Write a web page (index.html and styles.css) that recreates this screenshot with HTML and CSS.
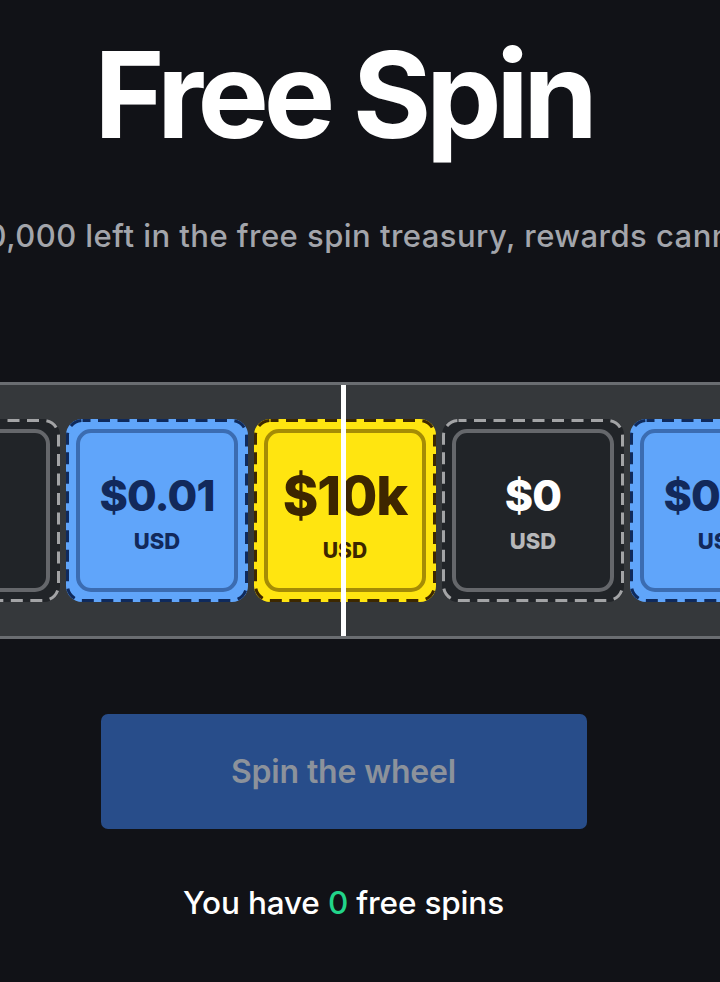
FILE: index.html
```html
<!DOCTYPE html>
<html lang="en">
<head>
<meta charset="utf-8">
<title>Free Spin</title>
<link rel="stylesheet" href="styles.css">
</head>
<body>
<main class="page">
  <header class="hero">
    <h1 class="title">Free Spin</h1>
    <div class="subtitle"><span>There is $10,000 left in the free spin treasury, rewards cannot exceed</span></div>
  </header>

  <section class="strip">
    <div class="reel">
      <div class="tile tile-dark">
        <svg class="dash" viewBox="0 0 182 183"><rect x="1.5" y="1.5" width="179" height="180" rx="15" ry="15"/></svg>
        <div class="tile-inner"><span class="value">$0</span><span class="unit">USD</span></div>
      </div>
      <div class="tile tile-blue">
        <svg class="dash" viewBox="0 0 182 183"><rect x="1.5" y="1.5" width="179" height="180" rx="15" ry="15"/></svg>
        <div class="tile-inner"><span class="value">$0.01</span><span class="unit">USD</span></div>
      </div>
      <div class="tile tile-yellow">
        <svg class="dash" viewBox="0 0 182 183"><rect x="1.5" y="1.5" width="179" height="180" rx="15" ry="15"/></svg>
        <div class="tile-inner"><span class="value value-big">$10k</span><span class="unit unit-big">USD</span></div>
      </div>
      <div class="tile tile-dark">
        <svg class="dash" viewBox="0 0 182 183"><rect x="1.5" y="1.5" width="179" height="180" rx="15" ry="15"/></svg>
        <div class="tile-inner"><span class="value">$0</span><span class="unit">USD</span></div>
      </div>
      <div class="tile tile-blue">
        <svg class="dash" viewBox="0 0 182 183"><rect x="1.5" y="1.5" width="179" height="180" rx="15" ry="15"/></svg>
        <div class="tile-inner"><span class="value">$0.01</span><span class="unit">USD</span></div>
      </div>
    </div>
    <div class="pointer"></div>
  </section>

  <section class="actions">
    <button class="spin-btn" type="button" disabled>Spin the wheel</button>
    <p class="count">You have <span class="count-num">0</span> free spins</p>
  </section>
</main>
</body>
</html>
```

FILE: styles.css
```css
* { box-sizing: border-box; }

html, body {
  margin: 0;
  padding: 0;
  background: #111217;
  overflow: hidden;
}

body {
  width: 720px;
  height: 982px;
  font-family: Inter, "Noto Sans", sans-serif;
  color: #ffffff;
}

.page {
  display: flex;
  flex-direction: column;
}

.hero {
  display: flex;
  flex-direction: column;
  align-items: center;
  padding-right: 33px;
}

.title {
  margin: 35px 0 0;
  font-size: 120px;
  line-height: 1;
  font-weight: 700;
  letter-spacing: -0.045em;
  color: #ffffff;
}

.subtitle {
  width: 100%;
  display: flex;
  justify-content: center;
  margin-top: 65px;
  font-size: 31px;
  line-height: 1;
  font-weight: 500;
  letter-spacing: 0.015em;
  color: #a3a5ab;
  white-space: nowrap;
}

.subtitle span {
  flex: none;
  padding-left: 14px;
}

.strip {
  position: relative;
  margin-top: 131px;
  height: 257px;
  background: #35383b;
  border-top: 3px solid #6a6d71;
  border-bottom: 3px solid #6a6d71;
  padding-top: 34px;
  overflow: hidden;
}

.reel {
  display: flex;
  gap: 6px;
  margin-left: -122px;
}

.tile {
  position: relative;
  flex: none;
  width: 182px;
  height: 183px;
  padding: 10px;
  border-radius: 16px;
}

.dash {
  position: absolute;
  inset: 0;
  width: 182px;
  height: 183px;
  fill: none;
  stroke-width: 3;
  stroke-dasharray: 12 7.5;
  stroke-dashoffset: 4;
}

.tile-inner {
  width: 100%;
  height: 100%;
  border-radius: 15px;
  border: 4px solid;
  display: flex;
  flex-direction: column;
  align-items: center;
  justify-content: center;
  gap: 13px;
}

.value {
  font-size: 43px;
  font-weight: 800;
  line-height: 1;
  letter-spacing: -0.02em;
  margin-top: 4px;
}

.value-big {
  font-size: 54px;
  margin-top: 8px;
}

.unit {
  font-size: 22px;
  font-weight: 800;
  line-height: 1;
}

.unit-big {
  font-size: 21px;
  margin-top: 4px;
}

.tile-blue { background: #60a5fa; }
.tile-blue .dash { stroke: #0f2a5c; }
.tile-blue .tile-inner { border-color: #3b6cb1; }
.tile-blue .value, .tile-blue .unit { color: #12295b; }

.tile-yellow { background: #ffe510; }
.tile-yellow .dash { stroke: #3d2800; }
.tile-yellow .tile-inner { border-color: #a58c05; }
.tile-yellow .value, .tile-yellow .unit { color: #3d2600; }

.tile-dark { background: #212428; }
.tile-dark .dash { stroke: #a3a4a6; }
.tile-dark .tile-inner { border-color: #65676b; }
.tile-dark .value { color: #ffffff; }
.tile-dark .unit { color: #b7b8ba; }

.pointer {
  position: absolute;
  left: 341px;
  top: 0;
  bottom: 0;
  width: 5px;
  background: #ffffff;
}

.actions {
  display: flex;
  flex-direction: column;
  align-items: center;
  padding-right: 33px;
}

.spin-btn {
  margin-top: 75px;
  width: 486px;
  height: 115px;
  border: none;
  border-radius: 7px;
  background: #284d8a;
  color: #8c929b;
  font-family: Inter, "Noto Sans", sans-serif;
  font-size: 32px;
  font-weight: 600;
  letter-spacing: -0.005em;
}

.count {
  margin: 58px 0 0;
  font-size: 31.5px;
  font-weight: 500;
  line-height: 1;
  letter-spacing: -0.005em;
  color: #ffffff;
}

.count-num { color: #22d48a; }
```
